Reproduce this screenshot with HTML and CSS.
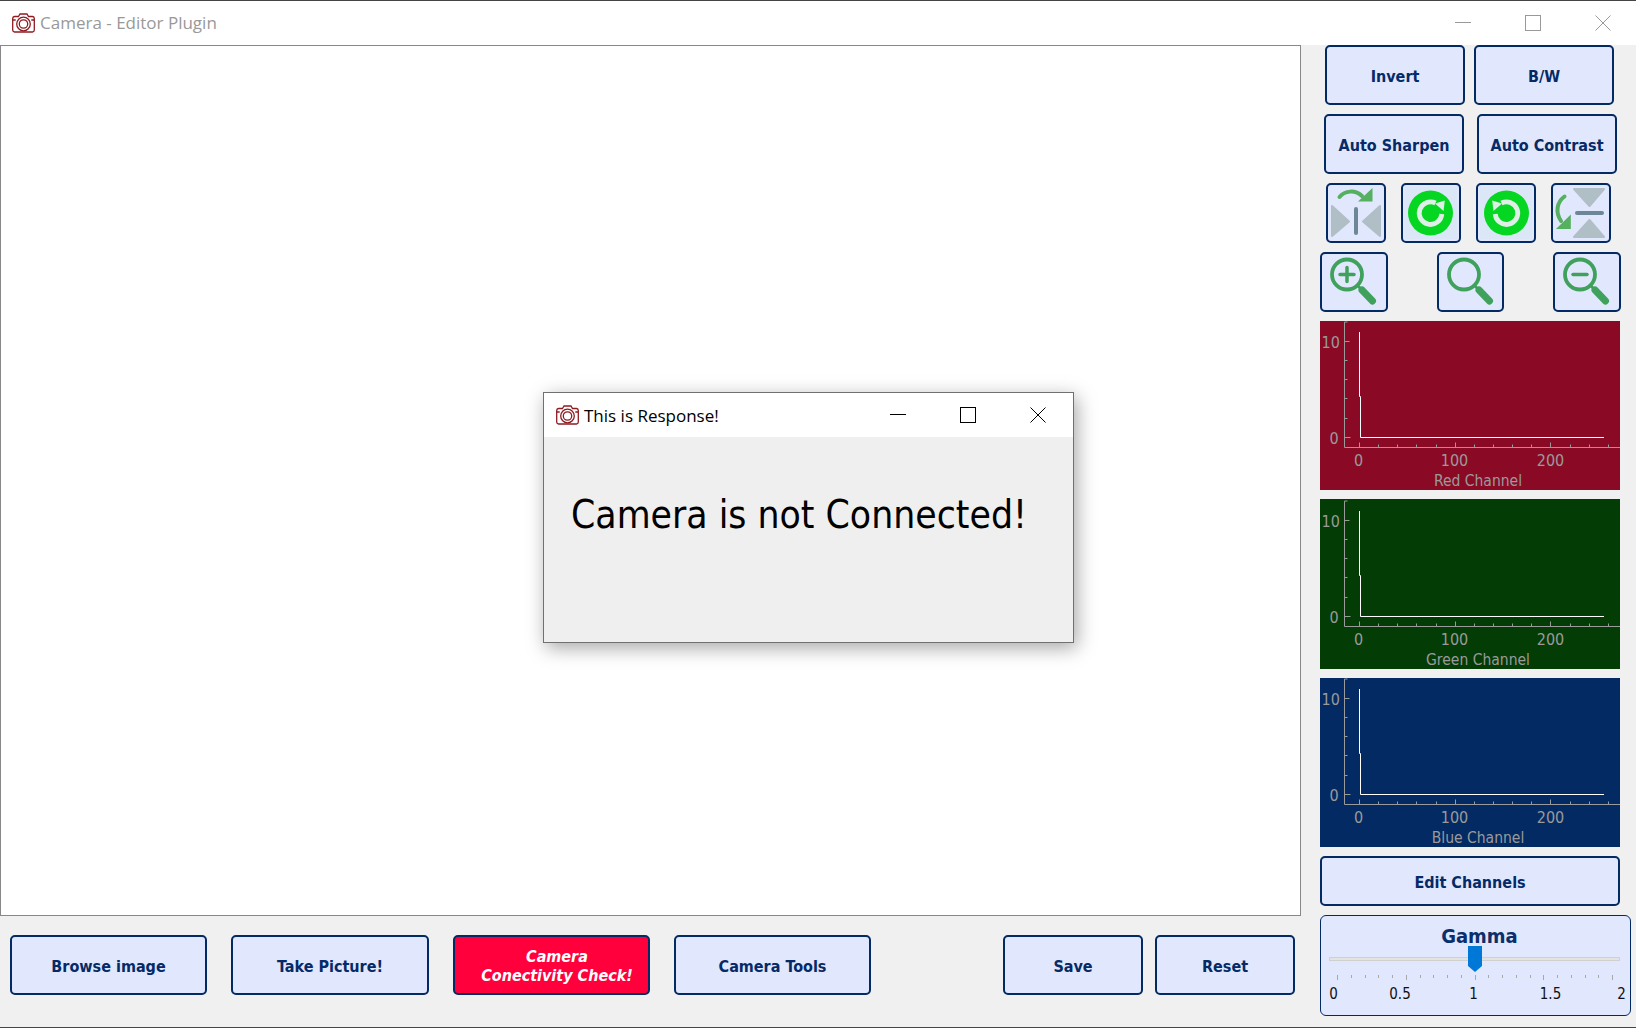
FILE: index.html
```html
<!DOCTYPE html>
<html lang="en">

<head>
  <meta charset="UTF-8">
  <title>Camera - Editor Plugin</title>
  <link rel="stylesheet" href="styles.css">
</head>

<body>
  <svg class="defs" width="0" height="0">
    <defs>
      <symbol id="camera" viewBox="0 0 23 20">
        <g fill="none" stroke="#8e1c22" stroke-width="1.3">
          <path d="M6.5 3.5 8 1h7l1.500 2.500H20.500a2 2 0 0 1 1.800 2V17a2 2 0 0 1-1.800 2H2.500a2 2 0 0 1-1.800-2V5.500a2 2 0 0 1 1.800-2Z" />
          <circle cx="11.500" cy="11" r="6.800" fill="#fff" />
          <circle cx="11.500" cy="11" r="4.200" />
          <path d="M.7 7h3M19.300 7h3" />
        </g>
      </symbol>
      <symbol id="axes" viewBox="0 0 300 169">
        <path fill="none" stroke="#9a9a9a" d="M24.500 1V126.500H300M24.500 1h3M24.500 20.500h5M24.500 39.500h3M24.500 58.500h3M24.500 77.500h3M24.500 97.500h3M24.500 116.500h6M39.500 126.500v-5M58.500 126.500v-3M77.500 126.500v-3M96.500 126.500v-3M116.500 126.500v-3M135.500 126.500v-5M154.500 126.500v-3M173.500 126.500v-3M192.500 126.500v-3M211.500 126.500v-3M230.500 126.500v-5M250.500 126.500v-3M269.500 126.500v-3M288.500 126.500v-3" />
        <path fill="none" stroke="#fff" d="M39.500 11V75.500H40.500V116.500H284" />
      </symbol>
      <symbol id="rotate" viewBox="0 0 60 60">
        <rect x="4" y="4" width="52" height="52" fill="#dbe7f7" />
        <circle cx="29.500" cy="30" r="22.500" fill="#05d622" />
        <path fill="none" stroke="#dfeee6" stroke-width="4.800" d="M40.800 31A11.300 11.300 0 1 1 34.500 20" />
        <path fill="#dfeee6" d="M34 20.500 43.800 17.500 42.500 28Z" />
      </symbol>
      <symbol id="lens" viewBox="0 0 68 60">
        <g fill="none" stroke="#40a15c" stroke-linecap="round">
          <circle cx="27" cy="22.500" r="15" stroke-width="3.800" />
          <path stroke-width="3" d="M37.500 33.500 41 37" />
          <path stroke-width="7" d="M42 38 52.500 49" />
        </g>
      </symbol>
    </defs>
  </svg>

  <div class="app">
    <header class="titlebar">
      <svg class="title-icon"><use href="#camera" /></svg>
      <span class="title-text">Camera - Editor Plugin</span>
      <div class="win-controls">
        <svg class="win-btn win-min" viewBox="0 0 16 16"><path d="M0 7.500h16" /></svg>
        <svg class="win-btn win-max" viewBox="0 0 16 16"><rect x=".5" y=".5" width="15" height="15" /></svg>
        <svg class="win-btn win-close" viewBox="0 0 16 16"><path d="M.5 .5 15.500 15.500M15.500 .5 .5 15.500" /></svg>
      </div>
    </header>

    <main class="workspace">
      <section class="left-col">
        <div class="canvas"></div>
        <div class="bottom-bar">
          <button class="btn btn-bottom">Browse image</button>
          <button class="btn btn-bottom btn-take">Take Picture!</button>
          <button class="btn btn-bottom btn-alert">Camera<br>Conectivity Check!</button>
          <button class="btn btn-bottom">Camera Tools</button>
          <button class="btn btn-small btn-save">Save</button>
          <button class="btn btn-small">Reset</button>
        </div>
      </section>

      <aside class="right-col">
        <div class="row row-first">
          <button class="btn btn-tool">Invert</button>
          <button class="btn btn-tool">B/W</button>
        </div>
        <div class="row row-second">
          <button class="btn btn-tool">Auto Sharpen</button>
          <button class="btn btn-tool">Auto Contrast</button>
        </div>
        <div class="row row-icons">
          <button class="btn btn-icon" aria-label="Flip horizontal">
            <svg viewBox="0 0 60 60">
              <g fill="#b0bec5" stroke="#b0bec5" stroke-width="2" stroke-linejoin="round">
                <path d="M6 23V53L23 38.500Z" />
                <path d="M54 23V53L37 38.500Z" />
              </g>
              <rect x="28" y="24" width="4" height="28" rx="2" fill="#6d8798" />
              <path fill="none" stroke="#55b060" stroke-width="4" stroke-linecap="round" d="M13.500 14C19 7.500 29 6.500 36 13" />
              <path fill="#55b060" d="M46.500 5V18.500H32Z" />
            </svg>
          </button>
          <button class="btn btn-icon" aria-label="Rotate right">
            <svg><use href="#rotate" /></svg>
          </button>
          <button class="btn btn-icon" aria-label="Rotate left">
            <svg class="mirror"><use href="#rotate" /></svg>
          </button>
          <button class="btn btn-icon" aria-label="Flip vertical">
            <svg viewBox="0 0 60 60">
              <g fill="#b0bec5" stroke="#b0bec5" stroke-width="2" stroke-linejoin="round">
                <path d="M23 6H53L38.500 23Z" />
                <path d="M23 54H53L38.500 37Z" />
              </g>
              <rect x="24" y="28" width="29" height="4" rx="2" fill="#6d8798" />
              <path fill="none" stroke="#55b060" stroke-width="4" stroke-linecap="round" d="M13.500 13.500C6 19 4 29 10 38" />
              <path fill="#55b060" d="M19.800 31.500V46H5Z" />
            </svg>
          </button>
        </div>
        <div class="row row-zoom">
          <button class="btn btn-zoom" aria-label="Zoom in">
            <svg viewBox="0 0 68 60">
              <use href="#lens" width="68" height="60" />
              <path stroke="#40a15c" stroke-width="3.500" stroke-linecap="round" d="M20 22.500H34M27 15.500V29.500" />
            </svg>
          </button>
          <button class="btn btn-zoom btn-zoom-mid" aria-label="Fit">
            <svg viewBox="0 0 68 60"><use href="#lens" width="68" height="60" /></svg>
          </button>
          <button class="btn btn-zoom" aria-label="Zoom out">
            <svg viewBox="0 0 68 60">
              <use href="#lens" width="68" height="60" />
              <path stroke="#40a15c" stroke-width="3.500" stroke-linecap="round" d="M20 22.500H34" />
            </svg>
          </button>
        </div>

        <div class="chart chart-red">
          <svg viewBox="0 0 300 169">
            <use href="#axes" width="300" height="169" />
            <text class="tick" x="1.500" y="26.500">10</text>
            <text class="tick" x="9.500" y="123">0</text>
            <text class="tick mid" x="38.500" y="145">0</text>
            <text class="tick mid" x="134.500" y="145">100</text>
            <text class="tick mid" x="230.500" y="145">200</text>
            <text class="tick mid tick-name" x="158" y="165">Red Channel</text>
          </svg>
        </div>
        <div class="chart chart-green">
          <svg viewBox="0 0 300 169">
            <use href="#axes" width="300" height="169" />
            <text class="tick" x="1.500" y="26.500">10</text>
            <text class="tick" x="9.500" y="123">0</text>
            <text class="tick mid" x="38.500" y="145">0</text>
            <text class="tick mid" x="134.500" y="145">100</text>
            <text class="tick mid" x="230.500" y="145">200</text>
            <text class="tick mid tick-name" x="158" y="165">Green Channel</text>
          </svg>
        </div>
        <div class="chart chart-blue">
          <svg viewBox="0 0 300 169">
            <use href="#axes" width="300" height="169" />
            <text class="tick" x="1.500" y="26.500">10</text>
            <text class="tick" x="9.500" y="123">0</text>
            <text class="tick mid" x="38.500" y="144.500">0</text>
            <text class="tick mid" x="134.500" y="144.500">100</text>
            <text class="tick mid" x="230.500" y="144.500">200</text>
            <text class="tick mid tick-name" x="158" y="165">Blue Channel</text>
          </svg>
        </div>

        <button class="btn btn-edit">Edit Channels</button>

        <div class="gamma">
          <svg viewBox="0 0 311 101">
            <text class="gamma-title" x="159.500" y="27.500">Gamma</text>
            <rect class="gamma-track" x="9.500" y="42.500" width="290" height="3" />
            <path class="gamma-ticks" d="M17.500 60v5M31.500 60v3M45.500 60v3M58.500 60v3M72.500 60v3M86.500 60v5M100.500 60v3M113.500 60v3M127.500 60v3M141.500 60v3M155.500 60v5M168.500 60v3M182.500 60v3M196.500 60v3M210.500 60v3M223.500 60v5M237.500 60v3M251.500 60v3M265.500 60v3M278.500 60v3M292.500 60v5" />
            <path class="gamma-thumb" d="M148 31H162V51L155 57 148 51Z" />
            <text class="gamma-label" x="13.500" y="84">0</text>
            <text class="gamma-label" x="80" y="84">0.5</text>
            <text class="gamma-label" x="153.500" y="84">1</text>
            <text class="gamma-label" x="230.500" y="84">1.5</text>
            <text class="gamma-label" x="301.500" y="84">2</text>
          </svg>
        </div>
      </aside>
    </main>

    <div class="dialog">
      <div class="dialog-title">
        <svg class="title-icon"><use href="#camera" /></svg>
        <span class="dialog-title-text">This is Response!</span>
        <div class="win-controls win-controls-dark">
          <svg class="win-btn win-min" viewBox="0 0 16 16"><path d="M0 7.500h16" /></svg>
          <svg class="win-btn win-max" viewBox="0 0 16 16"><rect x=".5" y=".5" width="15" height="15" /></svg>
          <svg class="win-btn win-close" viewBox="0 0 16 16"><path d="M.5 .5 15.500 15.500M15.500 .5 .5 15.500" /></svg>
        </div>
      </div>
      <div class="dialog-body">Camera is not Connected!</div>
    </div>
  </div>
</body>

</html>
```

FILE: styles.css
```css
* {
  box-sizing: border-box;
}

body {
  background: #f0f0f0;
  font-family: "DejaVu Sans", "Noto Sans", sans-serif;
  font-stretch: condensed;
  margin: 0;
}

.defs {
  display: block;
  height: 0;
  position: absolute;
}

.app {
  background: #f0f0f0;
  border-bottom: 1px solid #444;
  border-top: 1px solid #444;
  height: 1028px;
  overflow: hidden;
  position: relative;
  width: 1636px;
}

/* title bars */
.titlebar {
  align-items: center;
  background: #fff;
  display: flex;
  height: 44px;
  padding-bottom: 1px;
  padding-left: 12px;
}

.title-icon {
  flex: none;
  height: 20px;
  margin-right: 5px;
  width: 23px;
}

.title-text,
.dialog-title-text {
  font-family: "Open Sans", sans-serif;
  font-size: 17px;
  font-stretch: normal;
}

.title-text {
  color: #999;
}

.win-controls {
  display: flex;
  gap: 54px;
  margin-left: auto;
  margin-right: 25px;
  stroke: #999;
}

.win-controls-dark {
  gap: 54px;
  margin-right: 27px;
  stroke: #000;
}

.win-btn {
  fill: none;
  height: 16px;
  width: 16px;
}

/* main area */
.workspace {
  display: flex;
  height: 982px;
}

.left-col {
  display: flex;
  flex-direction: column;
  width: 1301px;
}

.canvas {
  background: #fff;
  border: 1px solid #888;
  height: 871px;
}

.bottom-bar {
  display: flex;
  gap: 24px;
  padding: 19px 6px 0 10px;
}

.btn {
  background: #e1e7fd;
  border: 2px solid #032a63;
  border-radius: 5px;
  color: #052a66;
  font-family: inherit;
  font-size: 16px;
  font-stretch: condensed;
  font-weight: 700;
  height: 60px;
  padding: 2px 0 0;
}

.btn-bottom {
  width: 197px;
}

.btn-take {
  width: 198px;
}

.btn-small {
  width: 140px;
}

.btn-save {
  margin-left: auto;
  margin-right: -12px;
}

.btn-alert {
  background: #ff003c;
  color: #fff;
  font-style: italic;
  line-height: 19px;
  padding-left: 11px;
}

.right-col {
  display: flex;
  flex-direction: column;
  gap: 9px;
  padding-left: 19px;
  width: 335px;
}

.row {
  display: flex;
}

.row-first {
  gap: 9px;
  padding-left: 5px;
}

.row-second {
  gap: 13px;
  padding-left: 4px;
}

.row-icons {
  gap: 15px;
  padding-left: 6px;
}

.row-zoom {
  justify-content: space-between;
  width: 301px;
}

.btn-tool {
  width: 140px;
}

.btn-icon {
  padding: 0;
  width: 60px;
}

.btn-zoom {
  padding: 0;
  width: 68px;
}

.btn-zoom-mid {
  width: 67px;
}

.btn svg {
  display: block;
  height: 60px;
  margin: -2px;
  width: 60px;
}

.btn-zoom svg {
  width: 68px;
}

.btn-icon .mirror {
  transform: scaleX(-1);
}

/* histograms */
.chart {
  height: 169px;
  width: 300px;
}

.chart svg {
  display: block;
  height: 169px;
  width: 300px;
}

.chart-red {
  background: #8a0a26;
}

.chart-green {
  background: #033c05;
  height: 170px;
  padding-top: 1px;
}

.chart-blue {
  background: #032a63;
}

.tick {
  fill: #9a9a9a;
  font-size: 16px;
}

.tick-name {
  font-size: 15.500px;
}

.mid {
  text-anchor: middle;
}

.btn-edit {
  height: 50px;
  width: 300px;
}

/* gamma slider */
.gamma {
  background: #e1e7fd;
  border: 1px solid #032a63;
  border-radius: 6px;
  height: 101px;
  width: 311px;
}

.gamma svg {
  display: block;
  height: 101px;
  margin: -1px;
  width: 311px;
}

.gamma-title {
  fill: #0b2f6c;
  font-size: 20px;
  font-weight: 700;
  text-anchor: middle;
}

.gamma-track {
  fill: #e3e3e3;
  stroke: #d0d0d0;
}

.gamma-ticks {
  stroke: #a8a8a8;
}

.gamma-thumb {
  fill: #0078d7;
}

.gamma-label {
  fill: #111;
  font-size: 15px;
  text-anchor: middle;
}

/* response dialog */
.dialog {
  background: #efefef;
  border: 1px solid #707070;
  box-shadow: 3px 5px 18px rgba(0, 0, 0, .35);
  height: 251px;
  left: 543px;
  position: absolute;
  top: 391px;
  width: 531px;
}

.dialog-title {
  align-items: center;
  background: #fff;
  display: flex;
  height: 44px;
  padding-left: 12px;
}

.dialog-title .title-icon {
  margin-right: 5px;
}

.dialog-body {
  color: #000;
  font-size: 38.700px;
  padding: 55px 0 0 27px;
}
```
